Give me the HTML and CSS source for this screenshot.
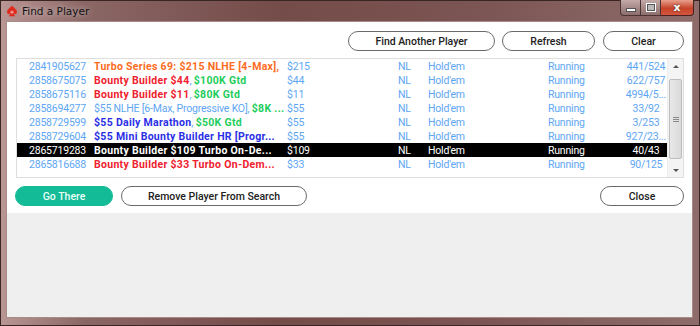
FILE: index.html
```html
<!DOCTYPE html>
<html lang="en">
<head>
    <meta charset="UTF-8">
    <title>Find a Player</title>
    <link rel="stylesheet" href="styles.css">
</head>
<body>
    <div class="window">
        <div class="titlebar">
            <svg class="app-icon" width="12" height="12" viewBox="0 0 12 12">
                <path d="M6 0.5 C4 3 1 4.5 1 7 C1 8.8 2.8 9.6 4.3 8.6 C4 9.8 3.4 10.6 2.6 11.2 L9.4 11.2 C8.6 10.6 8 9.8 7.7 8.6 C9.2 9.6 11 8.8 11 7 C11 4.5 8 3 6 0.5 Z" fill="#e02a20"/>
                <path d="M4 7.2 L6 5.2 L8 7.2 L6 9 Z" fill="#fff" opacity="0.5"/>
            </svg>
            <span class="title">Find a Player</span>
            <div class="controls">
                <div class="ctl-group">
                    <span class="ctl min"><i></i></span>
                    <span class="ctl max"><i></i></span>
                </div>
                <span class="ctl close">x</span>
            </div>
        </div>
        <div class="client">
            <div class="panel">
                <div class="top-buttons">
                    <button class="pill wide">Find Another Player</button>
                    <button class="pill mid">Refresh</button>
                    <button class="pill small">Clear</button>
                </div>

                <div class="list">
                    <div class="rows">
                        <div class="row">
                            <span class="id">2841905627</span>
                            <span class="name"><b class="orange">Turbo Series 69: $215 NLHE [4-Max],</b></span>
                            <span>$215</span><span>NL</span><span>Hold'em</span><span>Running</span>
                            <span class="count">441/524</span>
                        </div>
                        <div class="row">
                            <span class="id">2858675075</span>
                            <span class="name"><b class="red">Bounty Builder $44</b>, <b class="green">$100K Gtd</b></span>
                            <span>$44</span><span>NL</span><span>Hold'em</span><span>Running</span>
                            <span class="count">622/757</span>
                        </div>
                        <div class="row">
                            <span class="id">2858675116</span>
                            <span class="name"><b class="red">Bounty Builder $11</b>, <b class="green">$80K Gtd</b></span>
                            <span>$11</span><span>NL</span><span>Hold'em</span><span>Running</span>
                            <span class="count">4994/5...</span>
                        </div>
                        <div class="row">
                            <span class="id">2858694277</span>
                            <span class="name">$55 NLHE [6-Max, Progressive KO], <b class="green">$8K ...</b></span>
                            <span>$55</span><span>NL</span><span>Hold'em</span><span>Running</span>
                            <span class="count">33/92</span>
                        </div>
                        <div class="row">
                            <span class="id">2858729599</span>
                            <span class="name"><b class="blue">$55 Daily Marathon</b>, <b class="green">$50K Gtd</b></span>
                            <span>$55</span><span>NL</span><span>Hold'em</span><span>Running</span>
                            <span class="count">3/253</span>
                        </div>
                        <div class="row">
                            <span class="id">2858729604</span>
                            <span class="name"><b class="blue">$55 Mini Bounty Builder HR [Progr...</b></span>
                            <span>$55</span><span>NL</span><span>Hold'em</span><span>Running</span>
                            <span class="count">927/23...</span>
                        </div>
                        <div class="row selected">
                            <span class="id">2865719283</span>
                            <span class="name"><b>Bounty Builder $109 Turbo On-De...</b></span>
                            <span>$109</span><span>NL</span><span>Hold'em</span><span>Running</span>
                            <span class="count">40/43</span>
                        </div>
                        <div class="row">
                            <span class="id">2865816688</span>
                            <span class="name"><b class="red">Bounty Builder $33 Turbo On-Dem...</b></span>
                            <span>$33</span><span>NL</span><span>Hold'em</span><span>Running</span>
                            <span class="count">90/125</span>
                        </div>
                    </div>
                    <div class="scrollbar">
                        <span class="arrow up"></span>
                        <div class="track"><div class="thumb"><i></i></div></div>
                        <span class="arrow down"></span>
                    </div>
                </div>

                <div class="bottom-buttons">
                    <button class="pill go">Go There</button>
                    <button class="pill remove">Remove Player From Search</button>
                    <span class="spacer"></span>
                    <button class="pill close-btn">Close</button>
                </div>
            </div>
        </div>
    </div>
</body>
</html>
```

FILE: styles.css
```css
/* window frame */
body {
    margin: 0;
    background: #5a3a39;
    font-family: Roboto, "Liberation Sans", sans-serif;
}
.window {
    width: 700px;
    height: 326px;
    box-sizing: border-box;
    padding: 0 6px 7px 5px;
    display: flex;
    flex-direction: column;
    background: linear-gradient(90deg, #b99593 0%, #8a6664 12%, #744c4a 40%, #7c5654 70%, #8e6c6a 100%);
    border: 1px solid #3a2525;
}
.titlebar {
    height: 20px;
    display: flex;
    align-items: center;
    position: relative;
}
.app-icon {
    margin: 0 4px 0 0;
}
.title {
    font-family: "DejaVu Sans", "Liberation Sans", sans-serif;
    font-size: 10.5px;
    color: #111;
    text-shadow: 0 0 6px rgba(255, 255, 255, 0.7);
}
.controls {
    position: absolute;
    right: -1px;
    top: -1px;
    display: flex;
}
.ctl-group {
    display: flex;
    border: 1px solid #4a3332;
    border-top: none;
    border-radius: 0 0 0 4px;
    background: linear-gradient(#c2a9a8, #8d6e6c);
}
.ctl {
    width: 19px;
    height: 15px;
    display: flex;
    align-items: center;
    justify-content: center;
}
.ctl.max {
    border-left: 1px solid #4a3332;
}
.ctl.min i {
    width: 8px;
    height: 2px;
    margin-top: 5px;
    background: #fff;
    border: 1px solid #555;
}
.ctl.max i {
    width: 6px;
    height: 5px;
    border: 1px solid #555;
    outline: 1px solid #fff;
    background: #bbb;
}
.close {
    width: 32px;
    border: 1px solid #4a2020;
    border-top: none;
    border-left: none;
    border-radius: 0 0 4px 0;
    background: linear-gradient(#e7a08d, #c7432a 55%, #d2563c);
    color: #fff;
    font-family: "DejaVu Sans", sans-serif;
    font-weight: bold;
    font-size: 11px;
    text-shadow: 0 0 2px #333;
}
.client {
    flex: 1;
    background: #efefef;
    border: 1px solid #a88a89;
}
.panel {
    background: #fff;
    height: 191px;
    box-sizing: border-box;
    padding: 9px 8px 0 9px;
}

/* buttons */
.pill {
    height: 20px;
    box-sizing: border-box;
    border: 1px solid #6a6a6a;
    border-radius: 10px;
    background: #fff;
    font-family: Roboto, "Liberation Sans", sans-serif;
    font-weight: 500;
    font-size: 10.5px;
    color: #222;
    padding: 0;
    cursor: pointer;
}
.top-buttons {
    display: flex;
    justify-content: flex-end;
}
.wide { width: 147px; }
.mid { width: 93px; margin-left: 7px; }
.small { width: 81px; margin-left: 8px; }

/* table list */
.list {
    margin-top: 7px;
    height: 120px;
    box-sizing: border-box;
    border: 1px solid #dedede;
    display: flex;
}
.rows {
    flex: 1;
    min-width: 0;
}
.row {
    height: 14px;
    display: grid;
    grid-template-columns: 77px 193px 111px 30px 120px 77px minmax(0, 1fr);
    align-items: center;
    font-size: 10.5px;
    letter-spacing: -0.2px;
    color: #5ea6f4;
    white-space: nowrap;
}
.row span {
    overflow: hidden;
}
.row .id {
    padding-left: 12px;
}
.row b {
    font-weight: 700;
    letter-spacing: 0.3px;
}
.row .count {
    text-align: center;
    overflow: visible;
}
.orange { color: #fd6c22; }
.red { color: #f0212e; }
.green { color: #1fcd5c; }
.blue { color: #2a2ee6; }
.row.selected {
    background: #000;
    color: #fff;
}
.scrollbar {
    width: 15px;
    display: flex;
    flex-direction: column;
    border-left: 1px solid #eee;
    background: #f4f4f4;
}
.arrow {
    height: 14px;
    display: flex;
    align-items: center;
    justify-content: center;
}
.arrow::after {
    content: "";
    border-left: 3px solid transparent;
    border-right: 3px solid transparent;
}
.arrow.up::after { border-bottom: 3px solid #555; }
.arrow.down::after { border-top: 3px solid #555; }
.track {
    flex: 1;
    padding: 6px 1px 0 1px;
}
.thumb {
    height: 78px;
    border: 1px solid #bdbdbd;
    border-radius: 2px;
    background: linear-gradient(90deg, #e8e8e8, #dadada);
    display: flex;
    align-items: center;
    justify-content: center;
}
.thumb i {
    width: 6px;
    height: 5px;
    background: repeating-linear-gradient(#888 0 1px, transparent 1px 2px);
}

.bottom-buttons {
    margin-top: 8px;
    display: flex;
}
.spacer { flex: 1; }
.go {
    width: 98px;
    margin-left: -1px;
    background: #14bb97;
    border-color: #14bb97;
    color: #e9fff8;
}
.remove { width: 186px; margin-left: 8px; }
.close-btn { width: 84px; }
```
